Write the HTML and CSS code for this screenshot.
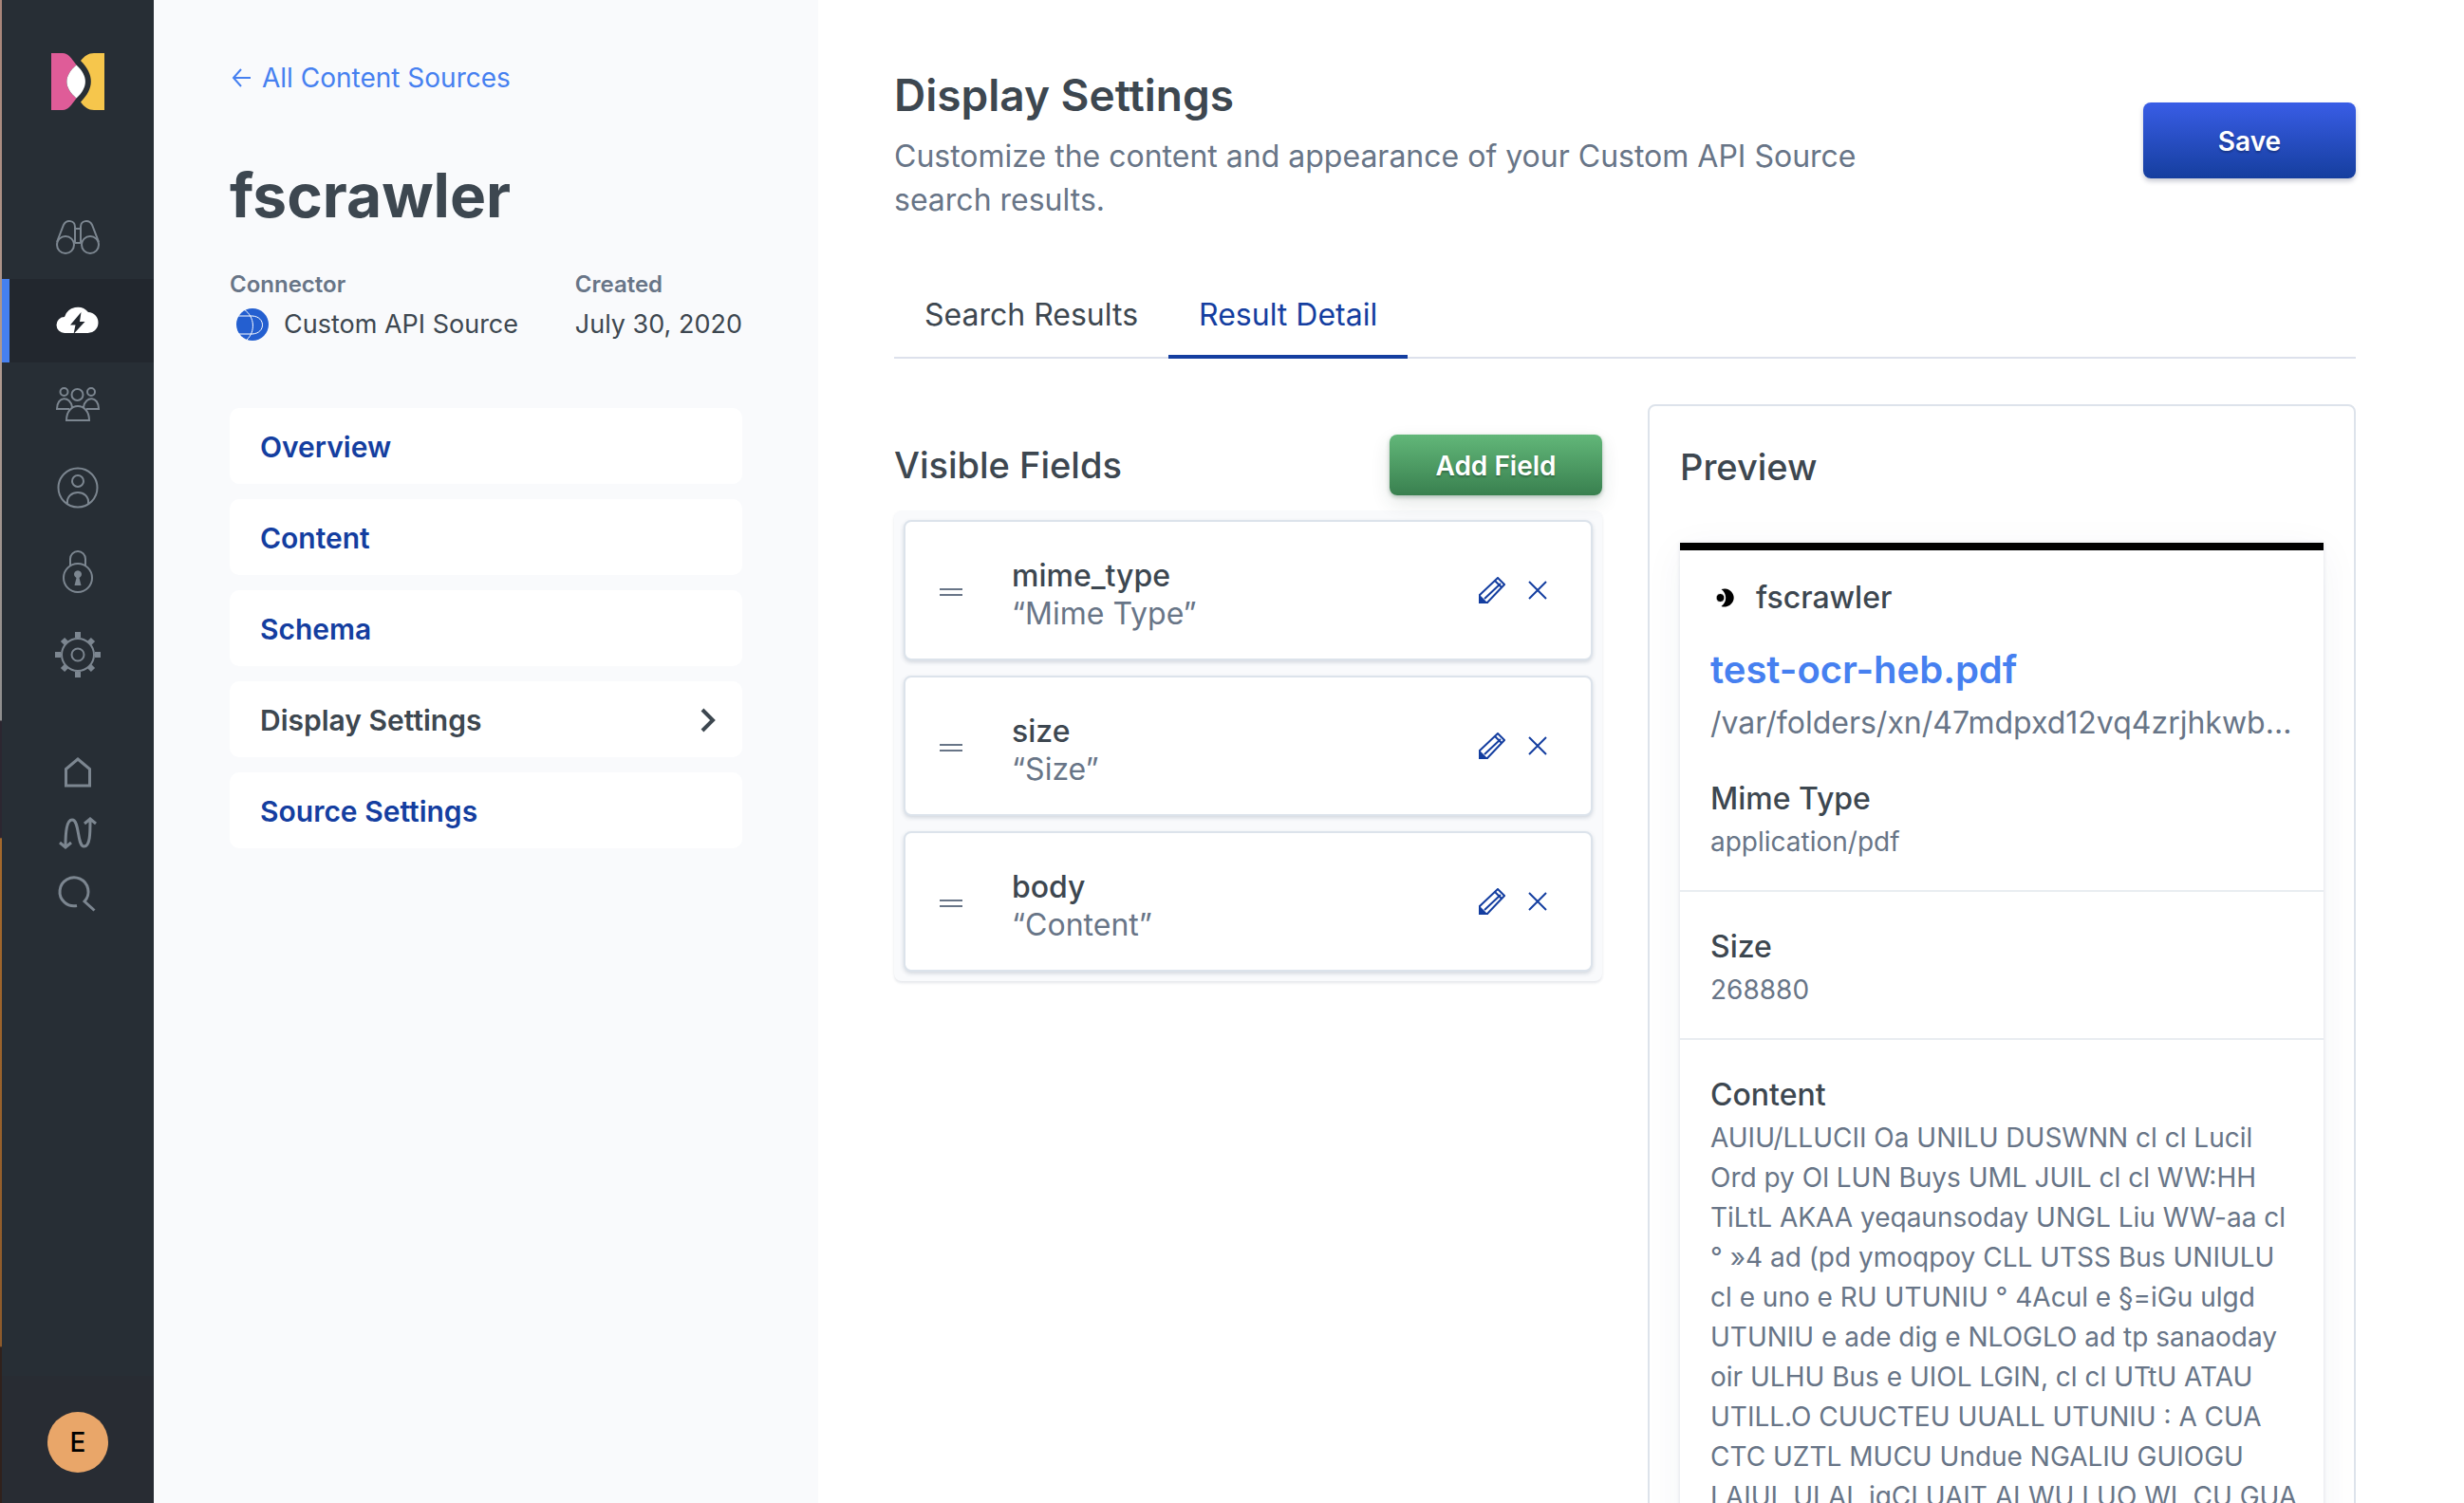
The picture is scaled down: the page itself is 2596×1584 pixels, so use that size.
FILE: index.html
```html
<!DOCTYPE html>
<html lang="en">
<head>
<meta charset="utf-8">
<title>Display Settings</title>
<link rel="stylesheet" href="styles.css">
</head>
<body>
<svg class="defs" aria-hidden="true">
  <symbol id="pencil" viewBox="0 0 28 28">
    <path d="M1 19 20 1l7 7L9 27H1z M6 23 23 7 M17 4l7 7" fill="none" stroke="currentColor" stroke-width="2"/>
    <path d="M0 18 10 28H0z" fill="currentColor"/>
  </symbol>
  <symbol id="cross" viewBox="0 0 20 20">
    <path d="M1 1l18 18M19 1 1 19" fill="none" stroke="currentColor" stroke-width="2"/>
  </symbol>
  <symbol id="grip" viewBox="0 0 24 10">
    <path d="M0 2h24M0 8h24" stroke="currentColor" stroke-width="2"/>
  </symbol>
</svg>
<div class="app">
  <nav class="rail" aria-label="Main">
    <a href="#" class="logo" aria-label="Workplace Search">
      <svg viewBox="0 0 56 60">
        <path d="M0 0h12c6 0 9 5 14.500 12.500C13 24 13 36 26.500 47.500 21 55 18 60 12 60H0z" fill="#df5c98"/>
        <path d="M26.500 12.500C39 24 39 36 26.500 47.500 13 36 13 24 26.500 12.500z" fill="#fff"/>
        <path d="M56 0H45c-6 0-10 3-14 8 14.500 15 14.500 29 0 43.500C35 57 39 60 45 60h11z" fill="#f6c64c"/>
      </svg>
    </a>
    <div class="rail-group">
      <a href="#" class="rail-link" aria-label="Overview">
        <svg viewBox="0 0 48 48"><circle cx="11" cy="32" r="9"/><circle cx="37" cy="32" r="9"/><path d="M2 29 9 11c3-6 12-5 12 2v17M46 29 39 11c-3-6-12-5-12 2v17M21 15h6M21 30h6"/></svg>
      </a>
      <a href="#" class="rail-link rail-link-active" aria-label="Sources" aria-current="page">
        <svg viewBox="0 0 48 48"><path class="cloud" d="M10 37a8.500 8.500 0 0 1 0-17 14.500 14.500 0 0 1 25-5A11 11 0 0 1 34 37z"/><path class="bolt" d="M27.500 15 16 28.500h5.500L19.500 38 31.500 25H26z"/></svg>
      </a>
      <a href="#" class="rail-link" aria-label="Groups">
        <svg viewBox="0 0 48 48"><circle cx="23.500" cy="14" r="6"/><circle cx="9.500" cy="11" r="4"/><circle cx="38" cy="11" r="4"/><path d="M12 41c0-20 24-20 24 0zM15 29H2c0-14 14-14 16-2M33 29h13c0-14-14-14-16-2"/></svg>
      </a>
      <a href="#" class="rail-link" aria-label="Users">
        <svg viewBox="0 0 48 48"><circle cx="24" cy="24" r="20.500"/><circle cx="24" cy="17" r="6"/><path d="M13 41c-2-16 24-16 22 0"/></svg>
      </a>
      <a href="#" class="rail-link" aria-label="Security">
        <svg viewBox="0 0 48 48"><circle cx="24" cy="31" r="15"/><path d="M16 19v-8a8 8 0 0 1 16 0v8"/><path class="solid" d="M20.500 39l2-8a4 4 0 1 1 3 0l2 8z"/></svg>
      </a>
      <a href="#" class="rail-link" aria-label="Settings">
        <svg viewBox="0 0 48 48"><circle cx="24" cy="24" r="17"/><circle cx="24" cy="24" r="6.500"/><path class="teeth" d="M24 0v6M24 42v6M0 24h6M42 24h6M8 8l4 4M36 36l4 4M40 8l-4 4M12 36l-4 4"/></svg>
      </a>
    </div>
    <div class="rail-group rail-group-small">
      <a href="#" class="rail-link" aria-label="Home">
        <svg class="bold" viewBox="0 0 48 48"><path d="M24 10 36.500 20.500V38h-25V20.500z"/></svg>
      </a>
      <a href="#" class="rail-link" aria-label="Activity">
        <svg class="bold" viewBox="0 0 48 48"><path d="M11 38C11 24 12 10 18 10c8 0 5 28 12.500 28C37 38 37 24 37 10M5 34l6 5 6-5M31 14l6-5 6 5"/></svg>
      </a>
      <a href="#" class="rail-link" aria-label="Search">
        <svg class="bold" viewBox="0 0 48 48"><path d="M23 36.500A15 15 0 1 1 31 32L41.500 41.500"/></svg>
      </a>
    </div>
    <div class="rail-account"><button class="avatar" type="button">E</button></div>
  </nav>

  <aside class="source">
    <a href="#" class="back"><svg viewBox="0 0 20 20"><path d="M10 1 2 10l8 9M2 10h18"/></svg>All Content Sources</a>
    <h1 class="source-name">fscrawler</h1>
    <dl class="meta">
      <div>
        <dt>Connector</dt>
        <dd><svg class="source-icon" viewBox="0 0 34 34"><circle cx="17" cy="17" r="17" fill="#245fd0"/><path d="M8 1c12 8 12 24 3 32M2 8h15c14 1 14 18 0 19H2" fill="none" stroke="#fff"/></svg>Custom API Source</dd>
      </div>
      <div>
        <dt>Created</dt>
        <dd>July 30, 2020</dd>
      </div>
    </dl>
    <nav class="menu" aria-label="Source">
      <a href="#">Overview</a>
      <a href="#">Content</a>
      <a href="#">Schema</a>
      <a href="#" class="menu-active" aria-current="page">Display Settings<svg viewBox="0 0 16 26"><path d="M2 2l11 11L2 24"/></svg></a>
      <a href="#">Source Settings</a>
    </nav>
  </aside>

  <main class="main">
    <header class="header">
      <div class="header-text">
        <h2>Display Settings</h2>
        <p>Customize the content and appearance of your Custom API Source search results.</p>
      </div>
      <button class="button button-save" type="button">Save</button>
    </header>
    <div class="tabs" role="tablist">
      <button type="button" role="tab" aria-selected="false">Search Results</button>
      <button type="button" role="tab" aria-selected="true">Result Detail</button>
    </div>
    <div class="columns">
      <section class="fields">
        <div class="fields-head">
          <h3>Visible Fields</h3>
          <button class="button button-add" type="button">Add Field</button>
        </div>
        <ul class="field-list">
          <li>
            <svg class="grip"><use href="#grip"/></svg>
            <div class="field-text"><strong>mime_type</strong><span>“Mime Type”</span></div>
            <button class="icon-button" type="button" aria-label="Edit mime_type"><svg class="pencil"><use href="#pencil"/></svg></button>
            <button class="icon-button" type="button" aria-label="Remove mime_type"><svg class="cross"><use href="#cross"/></svg></button>
          </li>
          <li>
            <svg class="grip"><use href="#grip"/></svg>
            <div class="field-text"><strong>size</strong><span>“Size”</span></div>
            <button class="icon-button" type="button" aria-label="Edit size"><svg class="pencil"><use href="#pencil"/></svg></button>
            <button class="icon-button" type="button" aria-label="Remove size"><svg class="cross"><use href="#cross"/></svg></button>
          </li>
          <li>
            <svg class="grip"><use href="#grip"/></svg>
            <div class="field-text"><strong>body</strong><span>“Content”</span></div>
            <button class="icon-button" type="button" aria-label="Edit body"><svg class="pencil"><use href="#pencil"/></svg></button>
            <button class="icon-button" type="button" aria-label="Remove body"><svg class="cross"><use href="#cross"/></svg></button>
          </li>
        </ul>
      </section>
      <section class="preview">
        <h3>Preview</h3>
        <article class="result">
          <div class="result-head">
            <div class="result-source"><svg viewBox="0 0 20 20"><circle cx="4.500" cy="10" r="4.500"/><path d="M5.500 1a10 9.500 0 1 1 0 18A11 11 0 0 0 5.500 1z"/></svg>fscrawler</div>
            <a href="#" class="result-title">test-ocr-heb.pdf</a>
            <div class="result-path">/var/folders/xn/47mdpxd12vq4zrjhkwb...</div>
          </div>
          <div class="result-field"><h4>Mime Type</h4><p>application/pdf</p></div>
          <div class="result-field"><h4>Size</h4><p>268880</p></div>
          <div class="result-field"><h4>Content</h4><p>AUIU/LLUCII Oa UNILU DUSWNN cl cl Lucil Ord py Ol LUN Buys UML JUIL cl cl WW:HH TiLtL AKAA yeqaunsoday UNGL Liu WW-aa cl ° »4 ad (pd ymoqpoy CLL UTSS Bus UNIULU cl e uno e RU UTUNIU ° 4Acul e §=iGu ulgd UTUNIU e ade dig e NLOGLO ad tp sanaoday oir ULHU Bus e UIOL LGIN, cl cl UTtU ATAU UTILL.O CUUCTEU UUALL UTUNIU : A CUA CTC UZTL MUCU Undue NGALIU GUIOGU LAIUL ULAL igCI UAIT ALWU LUO WL CU GUA</p></div>
        </article>
      </section>
    </div>
  </main>
</div>
</body>
</html>
```
FILE: styles.css
```css
* { box-sizing: border-box; }
body, h1, h2, h3, h4, p, dl, dd, ul { margin: 0; padding: 0; }
body {
  font-family: Inter, "Liberation Sans", sans-serif;
  font-size: 28px;
  line-height: 40px;
  color: #3d4750;
  background: #fff;
}
a { color: inherit; text-decoration: none; }
button { font: inherit; color: inherit; border: 0; padding: 0; background: none; cursor: pointer; }
.defs { position: absolute; width: 0; height: 0; }

.app {
  display: grid;
  grid-template-columns: 162px 700px minmax(0, 1fr);
  height: 100vh;
  overflow: hidden;
}

/* Icon rail */
.rail {
  display: flex;
  flex-direction: column;
  background: #272e35;
  border-left: 2px solid;
  border-image: linear-gradient(#a98579, #b09a90 25%, #8f8f8f 47.900%, #2c2630 48%, #2c2630 55.700%, #a5692c 55.800%, #8d5a2b 89.500%, #30211c 89.600%) 1;
}
.logo { align-self: center; margin: 56px 0 90px; height: 60px; }
.logo svg { display: block; width: 56px; height: 60px; }
.rail-link {
  display: flex;
  align-items: center;
  justify-content: center;
  height: 88px;
}
.rail-link svg {
  width: 48px;
  height: 48px;
  fill: none;
  stroke: #7c8690;
  stroke-width: 2;
}
.rail-link svg.bold { stroke-width: 3; }
.rail-link .solid { fill: #7c8690; stroke: none; }
.rail-link .teeth { stroke-width: 6; }
.rail-link .cloud { fill: #fff; stroke: none; }
.rail-link .bolt { fill: #22272e; stroke: none; }
.rail-link-active {
  background: #22272e;
  border-left: 8px solid #4680f0;
  padding-right: 8px;
}
.rail-group-small { margin-top: 48px; }
.rail-group-small .rail-link { height: 64px; }
.rail-account {
  display: flex;
  justify-content: center;
  margin-top: auto;
  padding: 38px 0 32px;
  background: #282c33;
}
.avatar {
  width: 64px;
  height: 64px;
  border-radius: 50%;
  background: #e9a669;
  color: #000;
  font-weight: 500;
}

/* Source sidebar */
.source { padding: 62px 80px 0; background: #f9fafc; }
.back { display: flex; align-items: center; gap: 12px; color: #4680f0; padding-left: 2px; }
.back svg { width: 20px; height: 20px; fill: none; stroke: currentColor; stroke-width: 2; }
.source-name {
  margin-top: 64px;
  font-size: 64px;
  line-height: 80px;
  font-weight: 700;
}
.meta { display: flex; justify-content: space-between; margin-top: 38px; }
.meta dt { font-size: 24px; line-height: 32px; font-weight: 600; color: #687587; }
.meta dd { display: flex; align-items: center; margin-top: 6px; font-size: 27px; }
.source-icon { width: 34px; height: 34px; margin: 0 16px 0 7px; }
.menu { display: flex; flex-direction: column; gap: 16px; margin-top: 68px; }
.menu a {
  display: flex;
  align-items: center;
  justify-content: space-between;
  height: 80px;
  padding: 2px 28px 0 32px;
  border-radius: 10px;
  background: #fff;
  color: #143ea0;
  font-size: 30px;
  font-weight: 600;
}
.menu .menu-active { color: #3d4750; }
.menu svg { width: 16px; height: 26px; fill: none; stroke: currentColor; stroke-width: 4; }

/* Main */
.main { padding: 70px 114px 0 80px; overflow: hidden; }
.header { display: flex; justify-content: space-between; align-items: flex-start; }
.header-text { max-width: 1060px; }
.header h2 { font-size: 46px; line-height: 60px; font-weight: 600; }
.header p { margin-top: 12px; font-size: 32px; line-height: 46px; color: #687587; }
.button {
  width: 224px;
  padding-top: 2px;
  border-radius: 8px;
  color: #fff;
  font-weight: 600;
  text-shadow: 0 2px 2px rgba(0, 0, 0, .25);
}
.button-save {
  height: 80px;
  margin-top: 38px;
  background: linear-gradient(#395de6, #153e9e);
  box-shadow: 0 3px 5px rgba(30, 40, 80, .25);
}
.button-add {
  height: 64px;
  background: linear-gradient(#62b779, #39804f);
  box-shadow: 0 2px 4px rgba(30, 80, 50, .3), 0 8px 20px rgba(30, 60, 50, .12);
}
.tabs { display: flex; margin-top: 52px; box-shadow: inset 0 -2px #dde1ec; }
.tabs button {
  padding: 26px 32px 22px;
  border-bottom: 4px solid transparent;
  font-size: 32px;
  line-height: 40px;
}
.tabs [aria-selected="true"] { color: #143ea0; border-color: #143ea0; }
.columns {
  display: grid;
  grid-template-columns: repeat(2, minmax(0, 1fr));
  gap: 48px;
  align-items: start;
  margin-top: 48px;
}
h3 { font-size: 38px; line-height: 48px; font-weight: 500; }
.fields { padding-top: 32px; }
.fields-head { display: flex; justify-content: space-between; align-items: center; }
.field-list {
  display: flex;
  flex-direction: column;
  gap: 16px;
  margin-top: 16px;
  padding: 10px;
  border-radius: 8px;
  background: #f9fafc;
  box-shadow: 0 2px 3px rgba(40, 60, 90, .12);
  list-style: none;
}
.field-list li {
  display: flex;
  align-items: center;
  height: 148px;
  padding: 0 46px 0 36px;
  border: 2px solid #dce3eb;
  border-radius: 8px;
  background: #fff;
  box-shadow: 0 2px 4px rgba(40, 60, 90, .18);
}
.grip { width: 24px; height: 10px; margin-top: 4px; color: #687587; }
.field-text {
  display: flex;
  flex-direction: column;
  flex: 1;
  padding: 10px 0 0 52px;
  font-size: 32px;
}
.field-text strong { font-weight: 500; }
.field-text span { color: #687587; }
.icon-button { display: flex; margin-left: 24px; color: #143ea0; }
.pencil { width: 28px; height: 28px; }
.cross { width: 20px; height: 20px; }

.preview { padding: 40px 32px; border: 2px solid #dde3eb; border-radius: 8px; }
.result {
  margin-top: 56px;
  border-top: 8px solid #000;
  box-shadow: 0 0 4px rgba(40, 60, 90, .14), 0 8px 40px rgba(40, 60, 90, .05);
}
.result-head { padding: 30px 32px 2px; }
.result-source { display: flex; align-items: center; font-size: 32px; font-weight: 500; }
.result-source svg { width: 20px; height: 20px; margin: 0 22px 0 6px; }
.result-source circle { stroke: #fff; stroke-width: 1; }
.result-title {
  display: block;
  margin-top: 32px;
  color: #4680f0;
  font-size: 40px;
  line-height: 48px;
  font-weight: 600;
}
.result-path {
  margin-top: 12px;
  overflow: hidden;
  text-overflow: ellipsis;
  white-space: nowrap;
  font-size: 32px;
  color: #687587;
}
.result-field { padding: 38px 26px 30px 32px; }
.result-field + .result-field { border-top: 2px solid #e9edf1; }
.result-field h4 { font-size: 32px; line-height: 40px; font-weight: 500; }
.result-field p { margin-top: 4px; line-height: 42px; color: #687587; }
```
